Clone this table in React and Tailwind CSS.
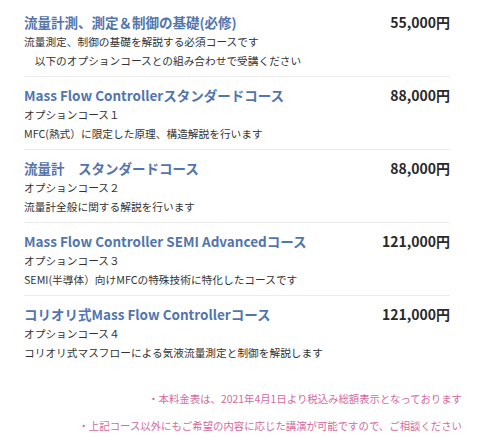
export default function App() {
  const rows = [
    {
      title: "流量計測、測定＆制御の基礎(必修)",
      price: "55,000円",
      lines: ["流量測定、制御の基礎を解説する必須コースです", "　以下のオプションコースとの組み合わせで受講ください"],
    },
    {
      title: "Mass Flow Controllerスタンダードコース",
      price: "88,000円",
      lines: ["オプションコース１", "MFC(熱式）に限定した原理、構造解説を行います"],
    },
    {
      title: "流量計　スタンダードコース",
      price: "88,000円",
      lines: ["オプションコース２", "流量計全般に関する解説を行います"],
    },
    {
      title: "Mass Flow Controller SEMI Advancedコース",
      price: "121,000円",
      lines: ["オプションコース３", "SEMI(半導体）向けMFCの特殊技術に特化したコースです"],
    },
    {
      title: "コリオリ式Mass Flow Controllerコース",
      price: "121,000円",
      lines: ["オプションコース４", "コリオリ式マスフローによる気液流量測定と制御を解説します"],
    },
  ];
  return (
    <div
      className="w-[480px] h-[437px] bg-white overflow-hidden"
      style={{ fontFamily: '"Noto Sans CJK JP", "Noto Sans", sans-serif' }}
    >
      <div className="pl-6 pr-[30px] pt-[4px]">
        {rows.map((r, i) => (
          <div
            key={i}
            className={
              "pt-2 pb-[6px] " + (i < rows.length - 1 ? "border-b border-[#ececec]" : "")
            }
          >
            <div className="flex justify-between items-center h-5">
              <span className="text-[13.5px] font-bold text-[#5275ad] leading-5">{r.title}</span>
              <span className="text-[14px] font-bold text-[#2a2a2a] leading-5">{r.price}</span>
            </div>
            {r.lines.map((l, j) => (
              <div key={j} className="text-[10.7px] leading-[19px] text-[#333]">
                {l}
              </div>
            ))}
          </div>
        ))}
      </div>
      <div className="pr-[18px] pt-[21px] flex flex-col items-end gap-[8px] text-[10.4px] leading-[19px] text-[#d46aa0]">
        <div>・本料金表は、2021年4月1日より税込み総額表示となっております</div>
        <div>・上記コース以外にもご希望の内容に応じた講演が可能ですので、ご相談ください</div>
      </div>
    </div>
  );
}
